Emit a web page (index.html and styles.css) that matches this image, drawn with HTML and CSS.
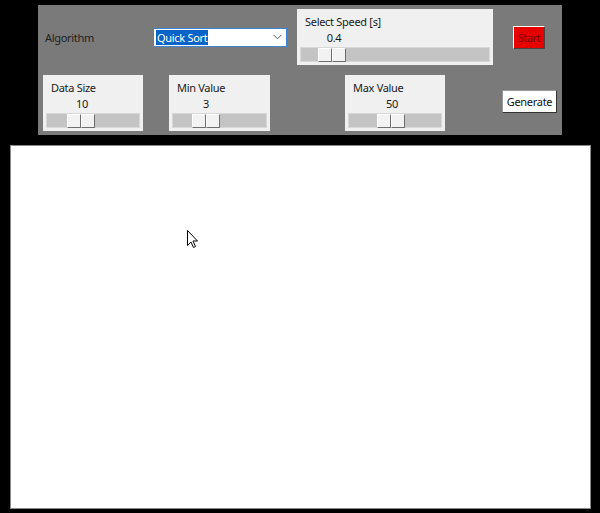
FILE: index.html
```html
<!DOCTYPE html>
<html>
<head>
<meta charset="utf-8">
<link rel="stylesheet" href="styles.css">
</head>
<body>
<div class="app">
  <div class="panel">
    <div class="row row1">
      <span class="algo-label">Algorithm</span>
      <div class="combo">
        <span class="combo-text">Quick Sort</span>
        <svg class="chev" width="9" height="6" viewBox="0 0 9 6"><path d="M0.5 0.8 L4.5 4.8 L8.5 0.8" fill="none" stroke="#555" stroke-width="1"/></svg>
      </div>
      <div class="frame speed">
        <div class="f-label">Select Speed [s]</div>
        <div class="f-value">0.4</div>
        <div class="trough"><div class="thumb" style="margin-left:17px"><i></i><i></i></div></div>
      </div>
      <button class="btn start">Start</button>
    </div>
    <div class="row row2">
      <div class="frame size">
        <div class="f-label">Data Size</div>
        <div class="f-value">10</div>
        <div class="trough"><div class="thumb" style="margin-left:20px"><i></i><i></i></div></div>
      </div>
      <div class="frame minv">
        <div class="f-label">Min Value</div>
        <div class="f-value">3</div>
        <div class="trough"><div class="thumb" style="margin-left:19px"><i></i><i></i></div></div>
      </div>
      <div class="frame maxv">
        <div class="f-label">Max Value</div>
        <div class="f-value">50</div>
        <div class="trough"><div class="thumb" style="margin-left:28px"><i></i><i></i></div></div>
      </div>
      <button class="btn generate">Generate</button>
    </div>
  </div>
  <div class="canvas"></div>
</div>
<svg class="cursor" width="12" height="19" viewBox="0 0 12 19"><path d="M0.5 0.5 L0.5 15.5 L4 12 L6.5 17.5 L8.5 16.5 L6 11 L10.5 11 Z" fill="#fff" stroke="#000" stroke-width="1"/></svg>
</body>
</html>
```
FILE: styles.css
```css
html, body {
  margin: 0;
  padding: 0;
  background: #000;
  width: 600px;
  height: 513px;
  overflow: hidden;
  font-family: "Noto Sans", "Open Sans", sans-serif;
  font-size: 11px;
  letter-spacing: -0.3px;
  color: #1a1a1a;
}
.app {
  display: flex;
  flex-direction: column;
  padding-top: 5px;
}
.panel {
  margin-left: 38px;
  width: 524px;
  height: 130px;
  background: #7a7a7a;
  box-sizing: border-box;
  padding-top: 4px;
  display: flex;
  flex-direction: column;
  gap: 10px;
}
.row {
  display: flex;
  align-items: center;
  height: 56px;
}
.algo-label {
  margin-left: 7px;
  width: 108px;
  color: #1e1e1e;
}
.combo {
  width: 134px;
  height: 19px;
  box-sizing: border-box;
  background: #fff;
  border: 1px solid #3a86d4;
  display: flex;
  align-items: center;
  padding-left: 2px;
}
.combo-text {
  background: #0a64c8;
  color: #fff;
  line-height: 15px;
  padding: 0 1px;
}
.chev {
  margin-left: auto;
  margin-right: 4px;
}
.frame {
  background: #f0f0f0;
  box-sizing: border-box;
  height: 56px;
  display: flex;
  flex-direction: column;
  padding: 6px 3px 3px 3px;
}
.f-label {
  padding-left: 5px;
  line-height: 14px;
}
.f-value {
  text-align: center;
  width: 72px;
  line-height: 14px;
  margin-top: 2px;
}
.trough {
  margin-top: auto;
  height: 15px;
  box-sizing: border-box;
  background: #c4c4c4;
  border: 1px solid #d8d8d8;
  display: flex;
}
.thumb {
  display: flex;
  height: 14px;
}
.thumb i {
  display: block;
  width: 14px;
  height: 14px;
  box-sizing: border-box;
  background: #f2f2f2;
  border: 1px solid #fff;
  border-right-color: #6e6e6e;
  border-bottom-color: #6e6e6e;
}
.speed {
  margin-left: 10px;
  width: 196px;
}
.speed .f-value {
  width: 68px;
}
.btn {
  font-family: inherit;
  font-size: 11px;
  letter-spacing: -0.3px;
  padding: 0;
  box-sizing: border-box;
  border: 1px solid #fff;
  border-right-color: #444;
  border-bottom-color: #444;
}
.start {
  margin-left: 20px;
  width: 32px;
  height: 23px;
  background: #e60000;
  color: #7a0000;
  letter-spacing: -0.5px;
}
.row2 {
  align-items: flex-start;
}
.size {
  margin-left: 5px;
  width: 100px;
}
.minv {
  margin-left: 26px;
  width: 101px;
}
.minv .f-value {
  width: 68px;
}
.maxv {
  margin-left: 75px;
  width: 100px;
}
.maxv .f-value {
  width: 88px;
}
.generate {
  margin-left: 57px;
  margin-top: 15px;
  width: 55px;
  height: 23px;
  background: #fff;
  color: #111;
  border: 1px solid #999;
  border-right-color: #333;
  border-bottom-color: #333;
}
.canvas {
  margin-left: 10px;
  margin-top: 10px;
  width: 581px;
  height: 364px;
  background: #fff;
  box-sizing: border-box;
  border: 1px solid #8a8a8a;
}
.cursor {
  position: absolute;
  left: 187px;
  top: 230px;
}
```
